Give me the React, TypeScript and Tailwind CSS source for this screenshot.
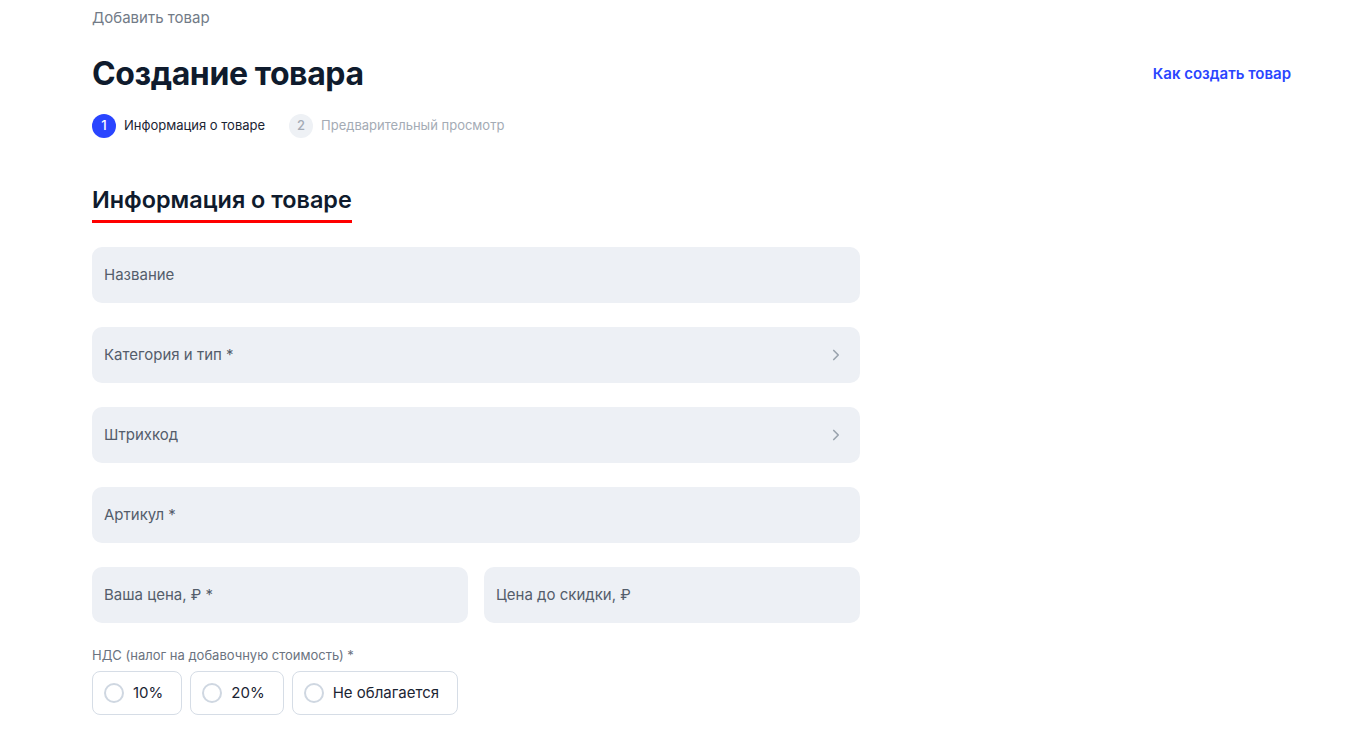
import { ChevronRight } from "lucide-react";

type Field = { label: string; arrow?: boolean };

const fields: Field[] = [
  { label: "Название" },
  { label: "Категория и тип *", arrow: true },
  { label: "Штрихкод", arrow: true },
  { label: "Артикул *" },
];

const vatOptions = ["10%", "20%", "Не облагается"];

function InputBox({ label, arrow }: Field) {
  return (
    <div className="flex h-14 items-center justify-between rounded-[10px] bg-[#edf0f5] pl-3 pr-[15px]">
      <span className="text-[15px] text-[#545d6b]">{label}</span>
      {arrow && <ChevronRight size={18} strokeWidth={2.2} className="text-[#9aa3ae]" />}
    </div>
  );
}

export default function App() {
  return (
    <div className="min-h-screen bg-white font-['Inter',sans-serif] text-[#0f1b2d]">
      <div className="mx-auto w-[1348px] pl-[92px] pr-[57px]">
        <div className="pt-[9px] text-[15px] leading-[18px] text-[#727b87]">Добавить товар</div>

        <div className="mt-[27px] flex items-center justify-between">
          <h1 className="text-[32px] font-bold leading-[40px] tracking-[-0.4px]">Создание товара</h1>
          <a className="text-[15px] font-semibold text-[#2a45ff]">Как создать товар</a>
        </div>

        <div className="mt-[20px] flex items-center gap-6 text-[13px]">
          <div className="flex items-center gap-2">
            <span className="flex h-6 w-6 items-center justify-center rounded-full bg-[#2a45ff] text-[13px] font-medium text-white">1</span>
            <span className="text-[#1b2433]">Информация о товаре</span>
          </div>
          <div className="flex items-center gap-2">
            <span className="flex h-6 w-6 items-center justify-center rounded-full bg-[#eef1f5] text-[13px] font-medium text-[#a4abb5]">2</span>
            <span className="text-[#a4abb5]">Предварительный просмотр</span>
          </div>
        </div>

        <div className="mt-[47px] inline-block">
          <h2 className="text-[23.4px] font-semibold leading-[30px]">Информация о товаре</h2>
          <div className="mt-[5px] h-[3px] bg-[#ff0000]" />
        </div>

        <div className="mt-[24px] flex w-[768px] flex-col gap-6">
          {fields.map((f) => (
            <InputBox key={f.label} label={f.label} arrow={f.arrow} />
          ))}
          <div className="grid grid-cols-2 gap-4">
            <InputBox label="Ваша цена, ₽ *" />
            <InputBox label="Цена до скидки, ₽" />
          </div>
        </div>

        <div className="mt-[24px] text-[13px] leading-4 text-[#6b7380]">НДС (налог на добавочную стоимость) *</div>
        <div className="mt-2 flex gap-2">
          {vatOptions.map((v) => (
            <label
              key={v}
              className="flex h-11 items-center gap-[9px] rounded-lg border border-[#d6dde6] bg-white pl-[11px] pr-[18px] text-[15px] text-[#1b2433]"
            >
              <span className="h-5 w-5 rounded-full border-2 border-[#cfd7e1]" />
              <span>{v}</span>
            </label>
          ))}
        </div>
      </div>
    </div>
  );
}
